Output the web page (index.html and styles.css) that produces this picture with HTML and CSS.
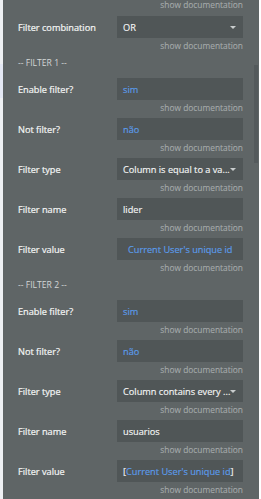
FILE: index.html
```html
<!DOCTYPE html>
<html>
<head>
<meta charset="utf-8">
<link rel="stylesheet" href="styles.css">
</head>
<body>
<div class="page">
  <div class="edge-left"></div>
  <div class="panel">
    <div class="content">
      <div class="doc top">show documentation</div>

      <div class="row"><div class="label">Filter combination</div><div class="box select"><span class="val">OR</span><span class="caret"></span></div></div>
      <div class="doc">show documentation</div>

      <div class="heading">-- FILTER 1 --</div>
      <div class="row"><div class="label">Enable filter?</div><div class="box"><span class="val blue">sim</span></div></div>
      <div class="doc">show documentation</div>
      <div class="row"><div class="label">Not filter?</div><div class="box"><span class="val blue">não</span></div></div>
      <div class="doc">show documentation</div>
      <div class="row"><div class="label">Filter type</div><div class="box select"><span class="val">Column is equal to a va...</span><span class="caret"></span></div></div>
      <div class="doc">show documentation</div>
      <div class="row"><div class="label">Filter name</div><div class="box"><span class="val">lider</span></div></div>
      <div class="doc">show documentation</div>
      <div class="row"><div class="label">Filter value</div><div class="box"><span class="val blue expr">Current User's unique id</span></div></div>
      <div class="doc">show documentation</div>

      <div class="heading">-- FILTER 2 --</div>
      <div class="row"><div class="label">Enable filter?</div><div class="box"><span class="val blue">sim</span></div></div>
      <div class="doc">show documentation</div>
      <div class="row"><div class="label">Not filter?</div><div class="box"><span class="val blue">não</span></div></div>
      <div class="doc">show documentation</div>
      <div class="row"><div class="label">Filter type</div><div class="box select"><span class="val">Column contains every ...</span><span class="caret"></span></div></div>
      <div class="doc">show documentation</div>
      <div class="row"><div class="label">Filter name</div><div class="box"><span class="val">usuarios</span></div></div>
      <div class="doc">show documentation</div>
      <div class="row"><div class="label">Filter value</div><div class="box"><span class="val">[<span class="blue">Current User's unique id</span>]</span></div></div>
      <div class="doc">show documentation</div>
    </div>
    <div class="scrollbar"></div>
  </div>
  <div class="edge-right"></div>
</div>
</body>
</html>
```
FILE: styles.css
```css
html, body {
  margin: 0;
  padding: 0;
  background: #f3f4f6;
  width: 261px;
  height: 499px;
  overflow: hidden;
}

.page {
  display: flex;
  width: 261px;
  height: 499px;
  font-family: "Open Sans", "Noto Sans", sans-serif;
}

.edge-left {
  width: 3px;
  flex: none;
  background: linear-gradient(#eef0f3 0 64px, #e4e8f4 64px 98px, #eef0f3 98px);
}

.panel {
  position: relative;
  width: 256px;
  flex: none;
  height: 499px;
  background: #5f6566;
  overflow: hidden;
}

.content {
  padding-left: 15px;
}

.row {
  display: flex;
  align-items: center;
  height: 22px;
}

.label {
  width: 99px;
  flex: none;
  font-size: 9.2px;
  color: #f4f5f5;
  white-space: nowrap;
  -webkit-text-stroke: 0.2px #f4f5f5;
}

.box {
  width: 126px;
  height: 22px;
  flex: none;
  background: #505657;
  display: flex;
  align-items: center;
  padding: 0 6px;
  box-sizing: border-box;
  font-size: 9.2px;
  color: #f4f5f5;
  white-space: nowrap;
  overflow: hidden;
  -webkit-text-stroke: 0.15px currentColor;
}

.select {
  justify-content: space-between;
  padding-right: 7px;
}

.val {
  white-space: nowrap;
}

.blue {
  color: #5b9cec;
}

.expr {
  padding-left: 5px;
}

.caret {
  width: 0;
  height: 0;
  border-left: 3px solid transparent;
  border-right: 3px solid transparent;
  border-top: 3px solid #c9cdce;
  flex: none;
}

.doc {
  width: 225px;
  height: 18px;
  line-height: 16px;
  text-align: right;
  font-size: 8.4px;
  color: #a5aaab;
  white-space: nowrap;
  -webkit-text-stroke: 0.1px #a5aaab;
}

.doc.top {
  height: 16px;
  line-height: 10px;
}

.heading {
  height: 22px;
  line-height: 14px;
  font-size: 8.6px;
  color: #d3d6d6;
}

.scrollbar {
  position: absolute;
  left: 251px;
  top: 65px;
  width: 4px;
  height: 98px;
  background: #545a5c;
}

.edge-right {
  flex: 1;
  background: #ffffff;
}
```
